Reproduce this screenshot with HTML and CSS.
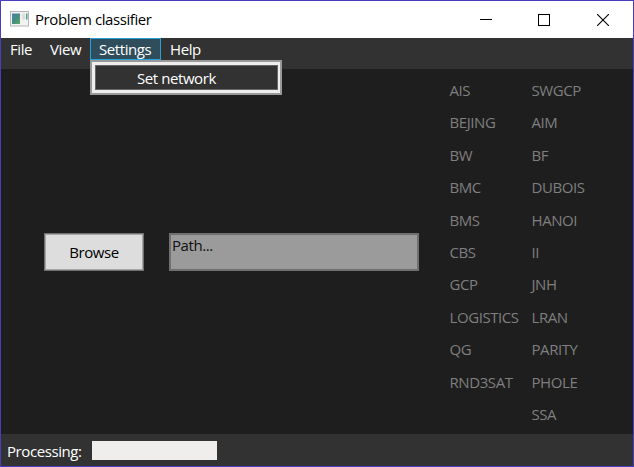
FILE: index.html
```html
<!DOCTYPE html>
<html lang="en">
<head>
<meta charset="utf-8">
<title>Problem classifier</title>
<link rel="stylesheet" href="styles.css">
</head>
<body>
<div class="window">
  <header class="titlebar">
    <svg class="app-icon" width="19" height="16" viewBox="0 0 19 16">
      <defs><linearGradient id="pane" x1="0" y1="0" x2="1" y2="1"><stop offset="0" stop-color="#4c7fae"/><stop offset=".5" stop-color="#458b80"/><stop offset="1" stop-color="#58ad68"/></linearGradient></defs>
      <rect x=".5" y=".5" width="18" height="14.5" fill="#f2f2f2" stroke="#b3b5b8"/>
      <rect x="2" y="2.5" width="8" height="10.5" fill="url(#pane)"/>
      <rect x="12" y="2.5" width="3" height="6" fill="#ddd"/>
      <rect x="16" y="2.5" width="1.5" height="6" fill="#58a090"/>
    </svg>
    <h1 class="title">Problem classifier</h1>
    <div class="controls">
      <svg width="12" height="12" viewBox="0 0 12 12"><path d="M0 5.5H12" stroke="#000"/></svg>
      <svg width="12" height="12" viewBox="0 0 12 12"><rect x=".5" y=".5" width="11" height="11" fill="none" stroke="#000"/></svg>
      <svg class="close" width="12" height="12" viewBox="0 0 12 12"><path d="M0 0L12 12M12 0L0 12" stroke="#000" stroke-width="1.1"/></svg>
    </div>
  </header>
  <nav class="menubar">
    <div class="menu file">File</div>
    <div class="menu view">View</div>
    <div class="menu settings open">Settings
      <div class="dropdown"><div class="option">Set network</div></div>
    </div>
    <div class="menu help">Help</div>
  </nav>
  <main class="content">
    <button class="browse">Browse</button>
    <div class="path">Path...</div>
    <div class="classes">
      <ul class="column">
        <li>AIS</li><li>BEJING</li><li>BW</li><li>BMC</li><li>BMS</li><li>CBS</li><li>GCP</li><li>LOGISTICS</li><li>QG</li><li>RND3SAT</li>
      </ul>
      <ul class="column">
        <li>SWGCP</li><li>AIM</li><li>BF</li><li>DUBOIS</li><li>HANOI</li><li>II</li><li>JNH</li><li>LRAN</li><li>PARITY</li><li>PHOLE</li><li>SSA</li>
      </ul>
    </div>
  </main>
  <footer class="status">
    <span class="status-label">Processing:</span>
    <div class="progress"></div>
  </footer>
</div>
</body>
</html>
```

FILE: styles.css
```css
* { box-sizing: border-box; }
body {
  margin: 0;
  font: 15px/20px "Open Sans", "Noto Sans", sans-serif;
  letter-spacing: -0.42px;
  color: #fff;
}
.window {
  width: 634px;
  height: 467px;
  border: 1px solid #483fc0;
  background: #1e1e1e;
  display: flex;
  flex-direction: column;
}
.titlebar {
  height: 37px;
  background: #fff;
  color: #000;
  display: flex;
  align-items: center;
  padding: 0 24px 0 9px;
}
.app-icon { margin-top: -1px; }
.title { margin: 0 0 2px 6px; font-size: 15px; font-weight: 400; }
.controls { margin-left: auto; display: flex; gap: 46px; }
.close { margin-left: 1px; }
.menubar {
  height: 31px;
  background: #323232;
  display: flex;
  align-items: flex-start;
  white-space: nowrap;
}
.menu { position: relative; height: 22px; border: 1px solid transparent; padding-left: 8px; line-height: 21px; }
.file { width: 40px; }
.view { width: 49px; }
.settings { width: 71px; }
.open { border-color: #26a0da; background: #304d5b; }
.dropdown {
  position: absolute;
  z-index: 1;
  left: -1px;
  top: 21px;
  width: 192px;
  height: 35px;
  border: 2px solid #999;
  background: #f0eded;
  padding: 3px 2px 3px 3px;
}
.option {
  height: 25px;
  border: 1px solid #666;
  background: #323232;
  padding-left: 41px;
  line-height: 25px;
}
.content { height: 365px; display: flex; align-items: flex-start; }
.browse {
  width: 100px;
  height: 38px;
  margin: 164px 0 0 43px;
  padding: 0 0 1px;
  border: 1px solid #707070;
  box-shadow: inset 0 0 0 1px #a6a6a6;
  background: #ddd;
  color: #000;
  font: inherit;
  letter-spacing: inherit;
}
.path {
  width: 250px;
  height: 38px;
  margin: 164px 0 0 25px;
  border: 2px solid #707070;
  background: #9b9b9b;
  color: #101010;
  padding-left: 1px;
  line-height: 21px;
}
.classes { display: flex; margin: 5px 0 0 30.5px; color: #7f7f7f; }
.column { list-style: none; margin: 0; padding: 0; width: 82px; }
.column li { height: 32.4px; line-height: 32.4px; }
.status {
  height: 32px;
  background: #323232;
  display: flex;
  align-items: center;
  padding-left: 6px;
}
.status-label { width: 85px; line-height: 20px; padding-top: 2px; }
.progress { width: 125px; height: 19px; background: #f0eded; }
```
